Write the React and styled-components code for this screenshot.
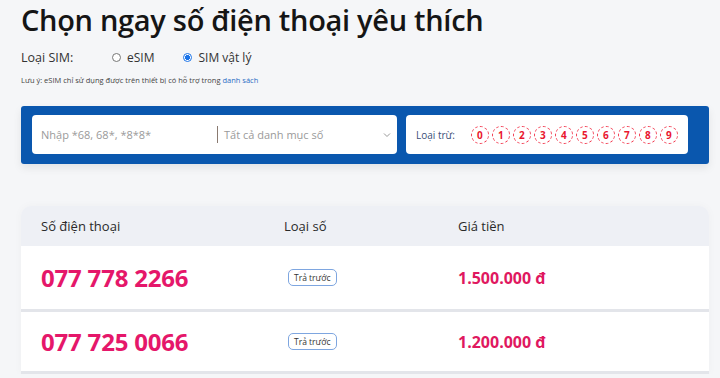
import React from "react";
import styled, { createGlobalStyle } from "styled-components";

const GlobalStyle = createGlobalStyle`
  * {
    margin: 0;
    padding: 0;
    box-sizing: border-box;
  }
  body {
    background: #f5f6f8;
    font-family: "Open Sans", "Liberation Sans", sans-serif;
    color: #222;
  }
`;

const Page = styled.div`
  width: 688px;
  margin-left: 21px;
  padding-top: 2px;
`;

const Title = styled.h1`
  font-size: 29px;
  font-weight: 600;
  line-height: 36px;
  color: #151515;
  letter-spacing: -0.3px;
`;

const SimRow = styled.div`
  display: flex;
  align-items: center;
  margin-top: 11px;
  height: 16px;
  font-size: 12.5px;
  color: #333;
`;

const SimLabel = styled.span`
  width: 91px;
`;

const Radio = styled.label`
  display: flex;
  align-items: center;
  gap: 6px;
  margin-right: 29px;
  font-size: 12px;
`;

const Dot = styled.span`
  width: 9px;
  height: 9px;
  border-radius: 50%;
  border: 1px solid ${(p) => (p.$on ? "#1a73e8" : "#777")};
  background: ${(p) => (p.$on ? "radial-gradient(circle, #1a73e8 45%, #fff 55%)" : "#fff")};
`;

const Note = styled.p`
  margin-top: 10px;
  font-size: 7.5px;
  color: #444;
  a {
    color: #2b6cc4;
    text-decoration: none;
  }
`;

const SearchBar = styled.div`
  margin-top: 21px;
  background: #0a57ae;
  border-radius: 3px;
  padding: 9px 21px 10px 11px;
  display: flex;
  gap: 9px;
  height: 58px;
  box-shadow: 0 4px 8px rgba(0, 0, 0, 0.08);
`;

const Box = styled.div`
  background: #fff;
  border-radius: 4px;
  display: flex;
  align-items: center;
  height: 39px;
  width: ${(p) => p.$w}px;
`;

const Placeholder = styled.span`
  font-size: 11px;
  color: #9a9a9a;
  padding-left: ${(p) => p.$pl || 0}px;
  flex: ${(p) => (p.$grow ? 1 : "none")};
`;

const Divider = styled.span`
  width: 1px;
  height: 17px;
  background: #8a7a70;
  margin: 0 6px 0 0;
`;

const Chevron = styled.svg`
  margin-right: 6px;
`;

const Exclude = styled.span`
  font-size: 10px;
  color: #3b4f78;
  margin-left: 10px;
  margin-right: 16px;
`;

const Digits = styled.div`
  display: flex;
  gap: 3px;
`;

const Digit = styled.span`
  width: 18px;
  height: 18px;
  border-radius: 50%;
  border: 1px dashed #f2394f;
  color: #e9172f;
  font-size: 10px;
  font-weight: 700;
  display: flex;
  align-items: center;
  justify-content: center;
`;

const Table = styled.div`
  margin-top: 42px;
  border-radius: 10px 10px 0 0;
  overflow: hidden;
  box-shadow: 0 0 10px rgba(0, 0, 0, 0.03);
`;

const Row = styled.div`
  display: grid;
  grid-template-columns: 243px 174px 1fr;
  align-items: center;
  padding-left: 20px;
  height: ${(p) => p.$h}px;
  background: ${(p) => (p.$head ? "#eef0f5" : "#fff")};
  border-bottom: ${(p) => (p.$head ? "none" : "3px solid #e3e5ea")};
`;

const HeadCell = styled.span`
  font-size: 13px;
  color: #2a2a2a;
`;

const Phone = styled.span`
  font-size: 24px;
  font-weight: 700;
  color: #e5176a;
  letter-spacing: -0.2px;
`;

const Badge = styled.span`
  justify-self: start;
  margin-left: 4px;
  font-size: 8.5px;
  color: #333;
  border: 1.5px solid #7ea6e0;
  border-radius: 5px;
  padding: 2px 5px;
`;

const Price = styled.span`
  font-size: 16px;
  font-weight: 700;
  color: #e0185f;
`;

const rows = [
  { phone: "077 778 2266", price: "1.500.000 đ", h: 66 },
  { phone: "077 725 0066", price: "1.200.000 đ", h: 62 },
];

export default function App() {
  return (
    <>
      <GlobalStyle />
      <Page>
        <Title>Chọn ngay số điện thoại yêu thích</Title>
        <SimRow>
          <SimLabel>Loại SIM:</SimLabel>
          <Radio>
            <Dot />
            eSIM
          </Radio>
          <Radio>
            <Dot $on />
            SIM vật lý
          </Radio>
        </SimRow>
        <Note>
          Lưu ý: eSIM chỉ sử dụng được trên thiết bị có hỗ trợ trong <a href="#">danh sách</a>
        </Note>
        <SearchBar>
          <Box $w={365}>
            <Placeholder $pl={9} style={{ width: 185 }}>Nhập *68, 68*, *8*8*</Placeholder>
            <Divider />
            <Placeholder $grow>Tất cả danh mục số</Placeholder>
            <Chevron width="8" height="6" viewBox="0 0 8 6">
              <path d="M1 1.5 L4 4.5 L7 1.5" fill="none" stroke="#999" strokeWidth="1" />
            </Chevron>
          </Box>
          <Box $w={282}>
            <Exclude>Loại trừ:</Exclude>
            <Digits>
              {[0, 1, 2, 3, 4, 5, 6, 7, 8, 9].map((d) => (
                <Digit key={d}>{d}</Digit>
              ))}
            </Digits>
          </Box>
        </SearchBar>
        <Table>
          <Row $head $h={40}>
            <HeadCell>Số điện thoại</HeadCell>
            <HeadCell>Loại số</HeadCell>
            <HeadCell>Giá tiền</HeadCell>
          </Row>
          {rows.map((r) => (
            <Row key={r.phone} $h={r.h}>
              <Phone>{r.phone}</Phone>
              <Badge>Trả trước</Badge>
              <Price>{r.price}</Price>
            </Row>
          ))}
        </Table>
      </Page>
    </>
  );
}
